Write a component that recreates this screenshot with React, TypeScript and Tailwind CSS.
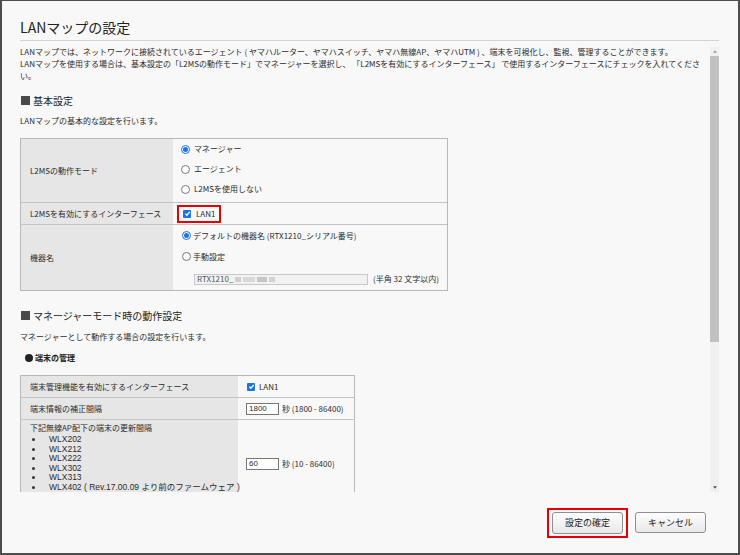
import React from "react";

const jp = "font-['Noto_Sans_CJK_JP','Liberation_Sans',sans-serif]";

const Radio = ({ checked }: { checked?: boolean }) =>
  checked ? (
    <span className="w-[9px] h-[9px] shrink-0 rounded-full border border-[#1a73e8] bg-white flex items-center justify-center">
      <span className="w-[5px] h-[5px] rounded-full bg-[#1a73e8]" />
    </span>
  ) : (
    <span className="w-[9px] h-[9px] shrink-0 rounded-full border border-[#767676] bg-white" />
  );

const Check = () => (
  <span className="w-[8px] h-[8px] shrink-0 rounded-[1px] bg-[#1a73e8] flex items-center justify-center">
    <svg viewBox="0 0 10 10" className="w-[7px] h-[7px]">
      <path d="M1.8 5.2 L4.1 7.4 L8.3 2.6" stroke="white" strokeWidth="1.9" fill="none" />
    </svg>
  </span>
);

const Heading = ({ children }: { children: React.ReactNode }) => (
  <div className="h-[14px] flex items-center gap-[3px] text-[10px] text-[#222]">
    <span className="w-[9px] h-[9px] bg-[#4a4a4a] ml-[1px]" />
    <span>{children}</span>
  </div>
);

const models = ["WLX202", "WLX212", "WLX222", "WLX302", "WLX313", "WLX402 ( Rev.17.00.09 より前のファームウェア )"];

export default function App() {
  return (
    <div className={`${jp} w-[740px] h-[555px] flex flex-col overflow-hidden bg-[#f8f8f8] text-[#2b2b2b] border-t border-l-2 border-r-2 border-b-2 border-[#4d4d4d]`}>
      {/* Title */}
      <div className="pl-[18px] pr-[19px] pt-[16px]">
        <div className="h-[20px] leading-[20px] text-[14px] text-[#222]">LANマップの設定</div>
        <div className="mt-[3px] h-px bg-[#d4d4d4]" />
      </div>

      {/* Scroll area */}
      <div className="flex h-[451px]">
        <div className="flex-1 min-w-0 overflow-hidden pl-[18px] pt-[5px]">
          <div className="text-[8px] leading-[12px] whitespace-nowrap">
            <div>LANマップでは、ネットワークに接続されているエージェント ( ヤマハルーター、ヤマハスイッチ、ヤマハ無線AP、ヤマハUTM ) 、端末を可視化し、監視、管理することができます。</div>
            <div>LANマップを使用する場合は、基本設定の「L2MSの動作モード」でマネージャーを選択し、 「L2MSを有効にするインターフェース」 で使用するインターフェースにチェックを入れてくださ</div>
            <div>い。</div>
          </div>

          <div className="mt-[11px]">
            <Heading>基本設定</Heading>
          </div>
          <div className="mt-[8px] text-[8px] leading-[12px]">LANマップの基本的な設定を行います。</div>

          {/* Table 1 */}
          <div className="mt-[11px] w-[428px] border border-[#b8b8b8] text-[8px]">
            <div className="flex border-b border-[#c4c4c4]">
              <div className="w-[152px] bg-[#e6e6e6] flex items-center pl-[9px]">L2MSの動作モード</div>
              <div className="flex-1 pl-[8px] pb-[3px]">
                <div className="h-[20px] flex items-center gap-[4px]"><Radio checked /><span>マネージャー</span></div>
                <div className="h-[20px] flex items-center gap-[4px]"><Radio /><span>エージェント</span></div>
                <div className="h-[20px] flex items-center gap-[4px]"><Radio /><span>L2MSを使用しない</span></div>
              </div>
            </div>
            <div className="flex h-[22px] border-b border-[#c4c4c4]">
              <div className="w-[152px] bg-[#e6e6e6] flex items-center pl-[9px]">L2MSを有効にするインターフェース</div>
              <div className="flex-1 flex items-center pl-[4px]">
                <div className="h-[18px] border-2 border-[#e60000] pl-[4px] pr-[4px] flex items-center gap-[5px]">
                  <Check />
                  <span>LAN1</span>
                </div>
              </div>
            </div>
            <div className="flex">
              <div className="w-[152px] bg-[#e6e6e6] flex items-center pl-[9px]">機器名</div>
              <div className="flex-1 pl-[9px]">
                <div className="h-[21px] flex items-center gap-[2px]"><Radio checked /><span>デフォルトの機器名 (RTX1210_シリアル番号)</span></div>
                <div className="h-[21px] flex items-center gap-[2px]"><Radio /><span>手動設定</span></div>
                <div className="h-[23px] flex items-center gap-[5px] pl-[12px] pt-[1px]">
                  <div className="w-[174px] h-[11px] border border-[#c8c8c8] bg-[#f2f2f2] flex items-center pl-[2px] gap-[2px] text-[#555]">
                    <span>RTX1210_</span>
                    <span className="w-[6px] h-[5px] bg-[#cfcfcf] blur-[0.6px]" />
                    <span className="w-[12px] h-[5px] bg-[#d8d8d8] blur-[0.6px]" />
                    <span className="w-[10px] h-[5px] bg-[#c6c6c6] blur-[0.6px]" />
                    <span className="w-[6px] h-[5px] bg-[#d2d2d2] blur-[0.6px]" />
                  </div>
                  <span>(半角 32 文字以内)</span>
                </div>
              </div>
            </div>
          </div>

          <div className="mt-[17px]">
            <Heading>マネージャーモード時の動作設定</Heading>
          </div>
          <div className="mt-[9px] text-[8px] leading-[12px]">マネージャーとして動作する場合の設定を行います。</div>
          <div className="mt-[9px] h-[12px] flex items-center gap-[2px] text-[8px] font-bold text-[#222]">
            <span className="w-[8px] h-[8px] rounded-full bg-[#222] ml-[5px]" />
            <span>端末の管理</span>
          </div>

          {/* Table 2 */}
          <div className="mt-[11px] w-[335px] border border-[#b8b8b8] text-[8px]">
            <div className="flex h-[22px] border-b border-[#c4c4c4]">
              <div className="w-[217px] bg-[#e6e6e6] flex items-center pl-[9px]">端末管理機能を有効にするインターフェース</div>
              <div className="flex-1 flex items-center pl-[9px] gap-[4px]"><Check /><span>LAN1</span></div>
            </div>
            <div className="flex h-[22px] border-b border-[#c4c4c4]">
              <div className="w-[217px] bg-[#e6e6e6] flex items-center pl-[9px]">端末情報の補正間隔</div>
              <div className="flex-1 flex items-center pl-[8px] gap-[3px]">
                <div className="w-[33px] h-[12px] border border-[#767676] bg-white flex items-center pl-[2px] font-['Liberation_Sans','Noto_Sans_CJK_JP',sans-serif]">1800</div>
                <span>秒 (1800 - 86400)</span>
              </div>
            </div>
            <div className="flex">
              <div className="w-[217px] bg-[#e6e6e6] pl-[9px] pt-[3px] pb-[15px]">
                <div className="leading-[10px]">下記無線AP配下の端末の更新間隔</div>
                <div className="mt-[2px] font-['Liberation_Sans','Noto_Sans_CJK_JP',sans-serif] text-[8.5px] leading-[9.5px]">
                  {models.map((m) => (
                    <div key={m} className="flex items-center whitespace-nowrap">
                      <span className="w-[3px] h-[3px] rounded-full bg-[#333] ml-[2px] mr-[14px] shrink-0" />
                      <span>{m}</span>
                    </div>
                  ))}
                </div>
              </div>
              <div className="flex-1 flex items-center pl-[8px] gap-[3px]">
                <div className="w-[33px] h-[12px] border border-[#767676] bg-white flex items-center pl-[2px] font-['Liberation_Sans','Noto_Sans_CJK_JP',sans-serif]">60</div>
                <span>秒 (10 - 86400)</span>
              </div>
            </div>
          </div>
        </div>

        {/* Scrollbar */}
        <div className="w-[9px] mt-[6px] mr-[19px] flex flex-col bg-[#f0f0f0]">
          <div className="h-[9px] flex items-center justify-center">
            <svg viewBox="0 0 6 4" className="w-[4px] h-[3px]"><path d="M0 4 L3 0 L6 4 Z" fill="#a0a0a0" /></svg>
          </div>
          <div className="h-[286px] bg-[#c1c1c1]" />
          <div className="flex-1" />
          <div className="h-[9px] flex items-center justify-center">
            <svg viewBox="0 0 6 4" className="w-[4px] h-[3px]"><path d="M0 0 L6 0 L3 4 Z" fill="#505050" /></svg>
          </div>
        </div>
      </div>

      {/* Footer */}
      <div className="h-[61px] flex items-center justify-end pr-[32px] gap-[7px] text-[9px] text-[#222]">
        <div className="border-2 border-[#e60000] px-[3px] py-[2px]">
          <button className="w-[71px] h-[22px] rounded-[3px] border border-[#8f8f8f] bg-gradient-to-b from-[#fdfdfd] to-[#e9e9e9]">設定の確定</button>
        </div>
        <button className="w-[71px] h-[21px] rounded-[3px] border border-[#8f8f8f] bg-gradient-to-b from-[#fdfdfd] to-[#e9e9e9]">キャンセル</button>
      </div>
    </div>
  );
}
